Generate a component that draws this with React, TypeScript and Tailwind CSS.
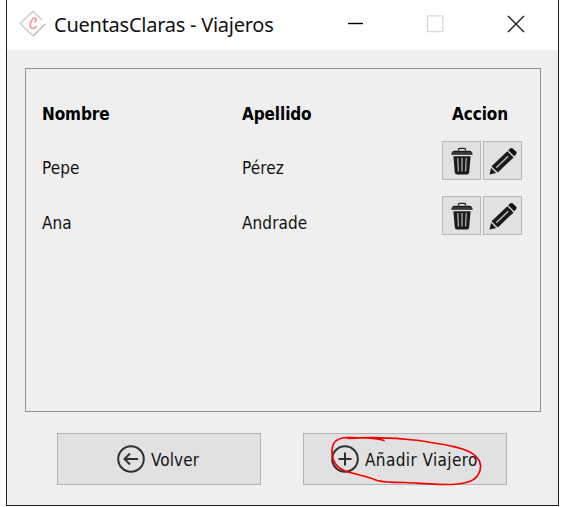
import type { ReactNode } from "react";

const travelers = [
  { name: "Pepe", surname: "Pérez" },
  { name: "Ana", surname: "Andrade" },
];

function AppLogo() {
  return (
    <svg className="block h-7 w-7" viewBox="0 0 28 28" fill="none">
      <path d="M23 10 14 1.2 1.3 13.5 14 26" stroke="#cccccc" strokeWidth="1.5" />
      <path d="m14 26 12.5-12.2" stroke="#bcbcbc" strokeWidth="1.5" />
      <path d="M16 11.8c1.2-.7 1.7-3.4.1-3.8-2.8-.5-5.6 5.2-4.7 8.4.8 3 4.2 2.3 5.8.2" stroke="#f6a3a3" strokeWidth="1.9" strokeLinecap="round" />
    </svg>
  );
}

function TrashIcon() {
  return (
    <svg className="block h-[28px] w-[22px]" viewBox="0 0 22 28" fill="none">
      <path d="M7.5 3.6V2.4q0-1 1-1h5q1 0 1 1v1.2" stroke="#222" strokeWidth="1.4" />
      <path d="M3 3.8h16q2.4.4 2.7 4H.3q.3-3.6 2.7-4" fill="#1b1b1b" />
      <path d="M1.5 6h19" stroke="#666" strokeWidth=".8" />
      <path d="M2.4 9.2h17.2L18.2 25.2q-.2 2.4-2.3 2.4H6.1q-2.1 0-2.3-2.4z" fill="#1b1b1b" />
      <path d="m6.7 11 .8 13.5M11 11v13.5M15.3 11l-.8 13.5" stroke="#b8b8b8" strokeWidth="1.2" />
    </svg>
  );
}

function PencilIcon() {
  return (
    <svg className="block h-7 w-7" viewBox="0 0 28 28" fill="none">
      <path d="M.6 27.4 2 20.8l5.2 5.1z" fill="#1a1a1a" />
      <path d="m2.5 19.2 15.8-15 6.3 6.2L8.8 25.4z" fill="#1a1a1a" />
      <path d="m19.2 3.3 1.9-1.9q1.3-1 2.6 0l3.3 3.2q1.1 1.2 0 2.6l-1.7 2z" fill="#111" />
      <path d="m7.2 20.8 12-11.6" stroke="#bababa" strokeWidth="1.5" />
    </svg>
  );
}

function CircleIcon({ children }: { children: ReactNode }) {
  return (
    <svg className="block h-7 w-7 shrink-0" viewBox="0 0 28 28" fill="none" stroke="#303030" strokeWidth="2">
      <circle cx="14" cy="14" r="12.8" />
      {children}
    </svg>
  );
}

function IconButton({ label, children }: { label: string; children: ReactNode }) {
  return (
    <button aria-label={label} className="flex h-[39px] w-[39px] items-center justify-center border border-[#b9b9b9] bg-[#e1e1e1]">
      {children}
    </button>
  );
}

export default function App() {
  return (
    <div className="h-[507px] w-[564px] bg-[#fdfdfd] pl-[6px] font-['DejaVu_Sans_Condensed','DejaVu_Sans',sans-serif] text-[17px] text-[#111]">
      <div className="flex h-[506px] w-[553px] flex-col border-x border-b border-[#202020] bg-[#efefef]">
        <header className="flex h-[50px] shrink-0 bg-white pl-[12px]">
          <div className="pt-[10px]">
            <AppLogo />
          </div>
          <h1 className="ml-[7px] mt-[11px] w-[294px] whitespace-nowrap font-['Noto_Sans',sans-serif] text-[20px] leading-[28px] tracking-[-0.25px]">
            CuentasClaras - Viajeros
          </h1>
          <svg className="mt-[15px] block h-[18px] w-[180px]" viewBox="0 0 180 18" fill="none">
            <path d="M-1 8.5h16" stroke="#000" strokeWidth="1.4" />
            <path d="M79.5.9h15.3v15.8H79.5z" stroke="#cfcfcf" />
            <path d="m160 1 16 16m0-16-16 16" stroke="#222" strokeWidth="1.4" />
          </svg>
        </header>
        <section className="ml-[18px] mt-[18px] h-[344px] w-[516px] shrink-0 border border-[#8e949d] pl-[16px] pt-[33px]">
          <div className="grid h-[24px] grid-cols-[200px_210px_80px] font-bold leading-[24px] tracking-[-0.1px] text-black">
            <span>Nombre</span>
            <span>Apellido</span>
            <span>Accion</span>
          </div>
          <div className="mt-[15px] flex flex-col gap-[16px]">
            {travelers.map((t) => (
              <div key={t.name} className="grid h-[39px] grid-cols-[200px_200px_80px] tracking-[0.1px]">
                <span className="pt-[15px] leading-[24px]">{t.name}</span>
                <span className="pt-[15px] leading-[24px]">{t.surname}</span>
                <div className="flex gap-[2px]">
                  <IconButton label="Eliminar"><TrashIcon /></IconButton>
                  <IconButton label="Editar"><PencilIcon /></IconButton>
                </div>
              </div>
            ))}
          </div>
        </section>
        <footer className="ml-[50px] mt-[21px] flex gap-[42px]">
          <button className="flex h-[52px] w-[204px] items-center border border-[#b3b3b3] bg-[#e1e1e1] pl-[59px]">
            <CircleIcon>
              <path d="M21 14H8m5-5.5L7.5 14l5.5 5.5" />
            </CircleIcon>
            <span className="ml-[6px] whitespace-nowrap pt-[3px] tracking-[0.1px]">Volver</span>
          </button>
          <button className="relative flex h-[52px] w-[204px] items-center border border-[#b3b3b3] bg-[#e1e1e1] pl-[27px]">
            <CircleIcon>
              <path d="M7.5 14h13M14 7.5v13" />
            </CircleIcon>
            <span className="ml-[6px] whitespace-nowrap pt-[3px] tracking-[0.4px]">Añadir Viajero</span>
            <svg className="absolute -left-px -top-px h-[54px] w-[204px]" viewBox="303 433 204 54" fill="none" stroke="#f80000" strokeWidth="1.7" strokeLinecap="round">
              <path d="M384 440.5c-8-3-29-3-38-3-10 1-14 5-14 14 0 11 5 16 12 19 10 4 22 5 33 10 7 2 17 2 28 2 20 1 33 2 47 2 14-1 25-3 28-14 2-7-1-11-5-15-8-8-31-11-56-15-24-3-42-4-71-2" />
            </svg>
          </button>
        </footer>
      </div>
    </div>
  );
}
